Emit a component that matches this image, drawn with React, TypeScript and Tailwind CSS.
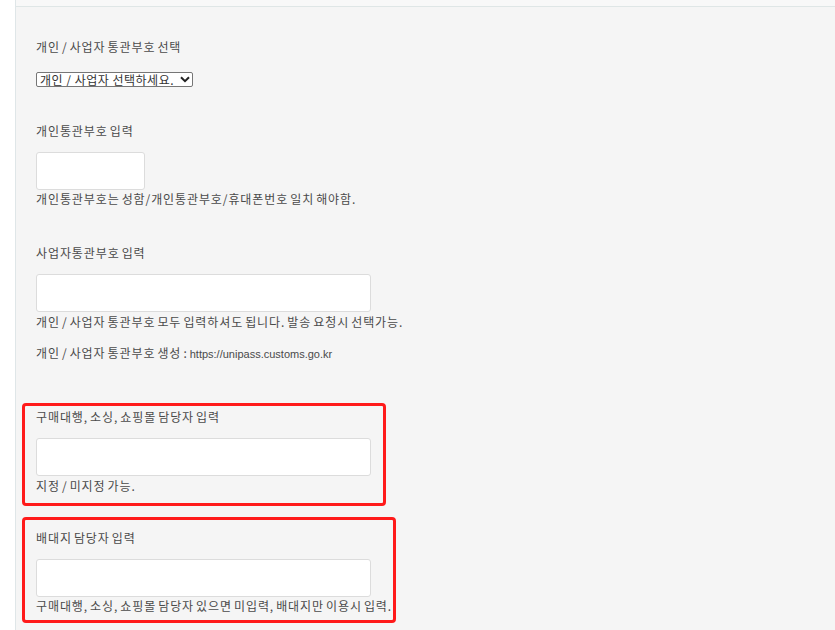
import React from "react";

const font = { fontFamily: '"Noto Sans CJK KR", "Noto Sans", sans-serif' };

function Label({ children, className = "" }: { children: React.ReactNode; className?: string }) {
  return (
    <div className={"h-[16px] text-[12px] leading-[16px] text-[#4a4a4a] tracking-[0.9px] [word-spacing:-1.5px] whitespace-nowrap " + className}>
      {children}
    </div>
  );
}

function TextInput({ className = "" }: { className?: string }) {
  return (
    <input
      type="text"
      className={"block h-[38px] bg-white border border-[#dcdcdc] rounded-[3px] outline-none " + className}
    />
  );
}

export default function App() {
  return (
    <div className="w-[835px] h-[630px] flex bg-white overflow-hidden" style={font}>
      <div className="w-[16px] bg-white border-r border-[#dfe6e8]" />
      <div className="flex-1 flex flex-col bg-[#f5f5f5]">
        <div className="h-[7px] bg-[#f8f8f8] border-b border-[#dfe6e6]" />
        <div className="pl-[20px] flex flex-col items-start">
          <Label className="mt-[32px]">개인 / 사업자 통관부호 선택</Label>
          <div className="relative mt-[17px]">
            <select
              className="appearance-none block w-[157px] h-[15px] pl-[3px] pr-[14px] text-[12px] leading-[13px] tracking-[0.5px] text-[#333] bg-white border border-[#767676] rounded-[2px]"
              defaultValue=""
            >
              <option value="">개인 / 사업자 선택하세요.</option>
              <option value="p">개인</option>
              <option value="b">사업자</option>
            </select>
            <svg
              className="pointer-events-none absolute right-[3px] top-[4px]"
              width="10"
              height="7"
              viewBox="0 0 10 7"
            >
              <path d="M1 1.2 L5 5.2 L9 1.2" fill="none" stroke="#222" strokeWidth="2" />
            </svg>
          </div>

          <Label className="mt-[36px]">개인통관부호 입력</Label>
          <TextInput className="mt-[13px] w-[109px]" />
          <Label className="mt-[1px]">개인통관부호는 성함/개인통관부호/휴대폰번호 일치 해야함.</Label>

          <Label className="mt-[38px]">사업자통관부호 입력</Label>
          <TextInput className="mt-[13px] w-[335px]" />
          <Label className="mt-[2px]">개인 / 사업자 통관부호 모두 입력하셔도 됩니다. 발송 요청시 선택가능.</Label>
          <Label className="mt-[15px]">
            개인 / 사업자 통관부호 생성 :{" "}
            <span
              className="text-[11px] tracking-[0px] leading-[16px]"
              style={{ fontFamily: '"Liberation Sans", Arial, sans-serif' }}
            >
              https://unipass.customs.go.kr
            </span>
          </Label>

          <div className="ml-[-14px] mt-[42px] w-[364px] border-[3px] border-[#ff1a1a] rounded-[4px] pl-[11px] pt-[3px] pb-[9px]">
            <Label>구매대행, 소싱, 쇼핑몰 담당자 입력</Label>
            <TextInput className="mt-[13px] w-[335px]" />
            <Label className="mt-[2px]">지정 / 미지정 가능.</Label>
          </div>

          <div className="ml-[-14px] mt-[11px] w-[374px] border-[3px] border-[#ff1a1a] rounded-[4px] pl-[11px] pt-[10px] pb-[6px]">
            <Label>배대지 담당자 입력</Label>
            <TextInput className="mt-[13px] w-[335px]" />
            <Label className="mt-[1px]">구매대행, 소싱, 쇼핑몰 담당자 있으면 미입력, 배대지만 이용시 입력.</Label>
          </div>
        </div>
      </div>
    </div>
  );
}
